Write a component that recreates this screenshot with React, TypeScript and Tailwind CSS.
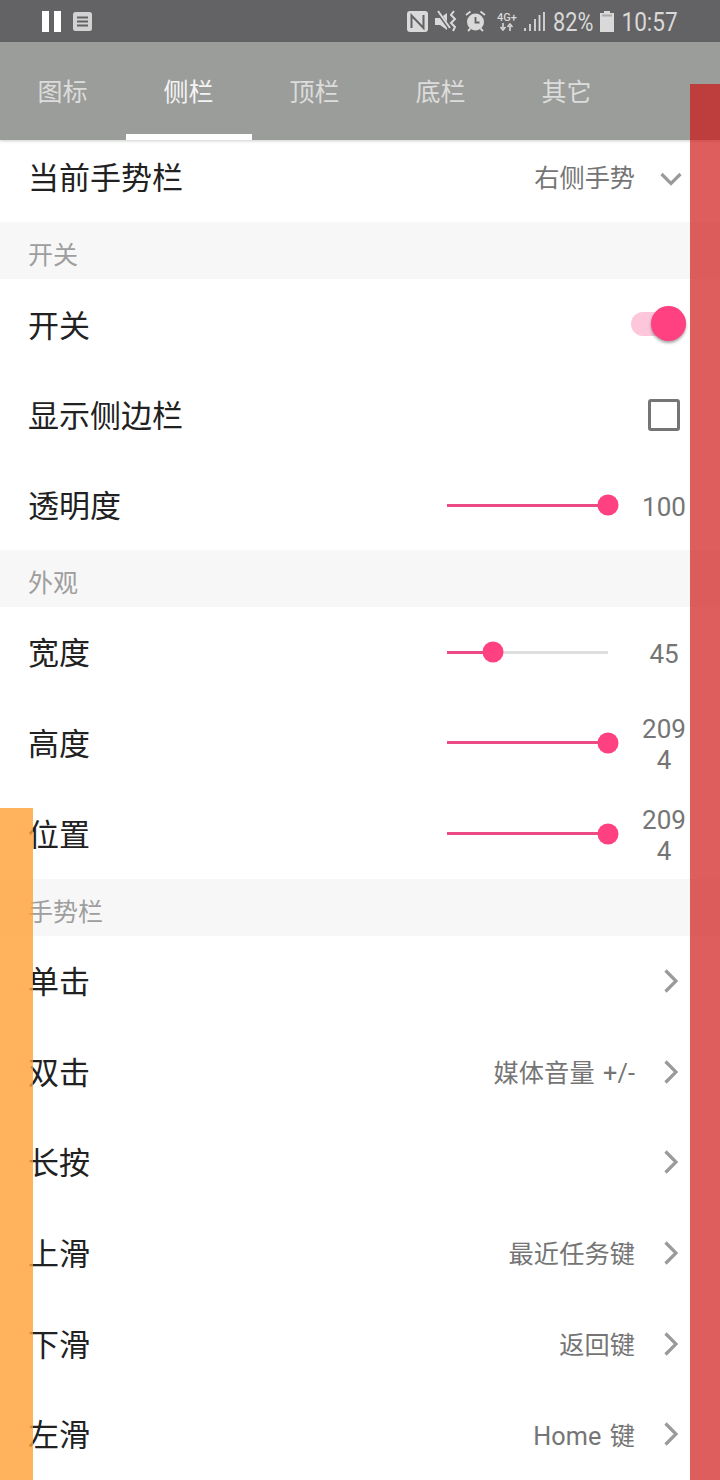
import type { ReactNode } from 'react';

const cjk = 'font-["Roboto","Noto_Sans_CJK_SC",sans-serif]';

function Section({ title }: { title: string }) {
  return (
    <div className="h-[57px] bg-[#f7f7f7] pl-[28px] pt-[10px] flex items-center text-[25px] leading-none text-[#9e9e9e]">
      {title}
    </div>
  );
}

function Row({ label, children, h = 'h-[90.6px]' }: { label: string; children?: ReactNode; h?: string }) {
  return (
    <div className={`${h} flex items-center pl-[28px] bg-white`}>
      <span className="pt-[3px] text-[31px] leading-none text-[#212121] whitespace-nowrap">{label}</span>
      <div className="ml-auto flex items-center">{children}</div>
    </div>
  );
}

function Slider({ percent, value }: { percent: number; value: string }) {
  return (
    <div className="flex items-center pr-[33px]">
      <div className="relative w-[161px] h-[3px] bg-[#dedede]">
        <div className="h-full bg-[#ec4a85]" style={{ width: `${percent}%` }} />
        <div
          className="absolute top-1/2 w-[21px] h-[21px] -translate-x-1/2 -translate-y-1/2 rounded-full bg-[#ff4081]"
          style={{ left: `${percent}%` }}
        />
      </div>
      <div className="w-[46px] ml-[33px] pt-[4px] text-center text-[26px] leading-[31px] text-[#757575] break-all">{value}</div>
    </div>
  );
}

function Nav({ value }: { value?: string }) {
  return (
    <div className="flex items-center pr-[41px]">
      {value && <span className="pt-[4px] text-[25.2px] leading-none text-[#757575] mr-[28px] [word-spacing:2px] tracking-[0.1px]">{value}</span>}
      <svg width="16" height="26" viewBox="0 0 16 26" fill="none" stroke="#9a9a9a" strokeWidth="3.2">
        <path d="M2.5 2.500 L13 13 L2.5 23.500" />
      </svg>
    </div>
  );
}

function StatusBar() {
  return (
    <div className="h-[42px] bg-[#636264] flex items-center pl-[42px] pr-[42px]">
      <div className="flex gap-[5px]">
        <div className="w-[7px] h-[21px] bg-white" />
        <div className="w-[7px] h-[21px] bg-white" />
      </div>
      <svg width="19" height="19" viewBox="0 0 19 19" className="ml-[12px]">
        <rect width="19" height="19" rx="2.5" fill="#d2d2d2" />
        <path d="M4 5.500h11M4 9.500h11M4 13.500h11" stroke="#636264" strokeWidth="1.8" />
      </svg>
      <div className="ml-auto flex items-center text-[#d9d9d9]">
        {/* nfc */}
        <svg width="21" height="21" viewBox="0 0 21 21">
          <rect width="21" height="21" rx="3" fill="#d9d9d9" />
          <path d="M4.500 17V4.500l12 12.500V4" fill="none" stroke="#636264" strokeWidth="2" />
        </svg>
        {/* vibrate / mute */}
        <svg width="23" height="22" viewBox="0 0 23 22" className="ml-[7px]">
          <path d="M0 8h5l7-5v17l-7-5H0z" fill="#d9d9d9" />
          <path d="M2 1l13 18" stroke="#636264" strokeWidth="3.500" />
          <path d="M3 1l12 17" stroke="#d9d9d9" strokeWidth="2" />
          <path d="M19 1l-3 4 4 4-4 4 4 4-2 4" fill="none" stroke="#d9d9d9" strokeWidth="2" />
        </svg>
        {/* alarm */}
        <svg width="21" height="22" viewBox="0 0 21 22" className="ml-[7px]">
          <circle cx="10.500" cy="12" r="8.500" fill="#d9d9d9" />
          <path d="M10.500 7v5.500h4" fill="none" stroke="#636264" strokeWidth="1.8" />
          <path d="M1 5l4.500-3.500M20 5L15.500 1.500M3 21l2.500-2.500M18 21l-2.500-2.500" stroke="#d9d9d9" strokeWidth="1.8" />
        </svg>
        {/* network */}
        <div className="ml-[10px] w-[22px] flex flex-col items-center">
          <span className="font-['Roboto',sans-serif] text-[11px] leading-[11px] font-medium whitespace-nowrap">4G+</span>
          <svg width="14" height="8" viewBox="0 0 14 8">
            <path d="M3 0v5M0.500 4l2.500 3 2.500-3M10 8V3M7.500 4L10 1l2.500 3" fill="none" stroke="#d9d9d9" strokeWidth="1.6" />
          </svg>
        </div>
        {/* signal */}
        <svg width="21" height="20" viewBox="0 0 21 20" className="ml-[6px]">
          <path d="M1 20v-3M6 20v-7M11 20V8M15.500 20V4M20 20V1" stroke="#d9d9d9" strokeWidth="1.8" />
        </svg>
        <div className="ml-[8px] w-[40px] flex justify-end pt-[2px]">
          <span className="origin-right scale-x-[0.87] font-['Roboto',sans-serif] text-[25px] leading-none">82%</span>
        </div>
        <svg width="14" height="21" viewBox="0 0 14 21" className="ml-[7px]">
          <path d="M4 0h6v2h4v19H0V2h4z" fill="#d9d9d9" />
          <rect x="2" y="3.500" width="10" height="2" fill="#aaaaaa" />
        </svg>
        <div className="ml-[8px] w-[56px] flex justify-end pt-[2px]">
          <span className="origin-right scale-x-[0.87] font-['Roboto',sans-serif] text-[26px] leading-none">10:57</span>
        </div>
      </div>
    </div>
  );
}

const tabs = ['图标', '侧栏', '顶栏', '底栏', '其它'];

function Tabs() {
  return (
    <div className="relative z-10 h-[98px] bg-[#9b9d9a] flex shadow-[0_1px_3px_rgba(0,0,0,0.2)]">
      {tabs.map((t, i) => (
        <div
          key={t}
          className={`w-[126px] flex items-center justify-center text-[25px] leading-none border-b-[6px] pt-[9px] pr-[1px] ${
            i === 1 ? 'text-[#f4f4f4] border-white' : 'text-[#dcdcdc] border-transparent'
          }`}
        >
          {t}
        </div>
      ))}
    </div>
  );
}

export default function App() {
  return (
    <div className={`relative w-[720px] h-[1480px] overflow-hidden bg-white ${cjk}`}>
      <StatusBar />
      <Tabs />

      <div className="h-[82px] flex items-center pl-[28px] pr-[38px] pb-[5px]">
        <span className="text-[31px] leading-none text-[#212121]">当前手势栏</span>
        <span className="ml-auto text-[25.2px] leading-none text-[#757575]">右侧手势</span>
        <svg width="22" height="14" viewBox="0 0 22 14" fill="none" stroke="#9a9a9a" strokeWidth="3.2" className="ml-[25px]">
          <path d="M1.500 2 L11 11.500 L20.500 2" />
        </svg>
      </div>

      <Section title="开关" />
      <Row label="开关" h="h-[91px]">
        <div className="relative w-[55px] h-[24px] mr-[34px] mb-[1px] rounded-full bg-[#fec6da]">
          <div className="absolute right-0 -top-[6px] w-[35px] h-[35px] rounded-full bg-[#ff4081] shadow-[0_2px_3px_rgba(0,0,0,0.35)]" />
        </div>
      </Row>
      <Row label="显示侧边栏" h="h-[90px]">
        <div className="w-[32px] h-[32px] mr-[40px] rounded-[3px] border-[3.5px] border-[#757575]" />
      </Row>
      <Row label="透明度" h="h-[90px]">
        <Slider percent={100} value="100" />
      </Row>

      <Section title="外观" />
      <Row label="宽度" h="h-[90px]">
        <Slider percent={28.4} value="45" />
      </Row>
      <Row label="高度" h="h-[91px]">
        <Slider percent={100} value="2094" />
      </Row>
      <Row label="位置" h="h-[91px]">
        <Slider percent={100} value="2094" />
      </Row>

      <Section title="手势栏" />
      <Row label="单击"><Nav /></Row>
      <Row label="双击"><Nav value="媒体音量 +/-" /></Row>
      <Row label="长按"><Nav /></Row>
      <Row label="上滑"><Nav value="最近任务键" /></Row>
      <Row label="下滑"><Nav value="返回键" /></Row>
      <Row label="左滑"><Nav value="Home 键" /></Row>

      {/* floating gesture bars drawn over the app */}
      <div className="absolute z-20 right-0 top-[84px] bottom-0 w-[30px] bg-[#ce0f0f]/[.67]" />
      <div className="absolute z-20 left-0 top-[808px] bottom-0 w-[33px] bg-[#ffa033]/80" />
    </div>
  );
}
